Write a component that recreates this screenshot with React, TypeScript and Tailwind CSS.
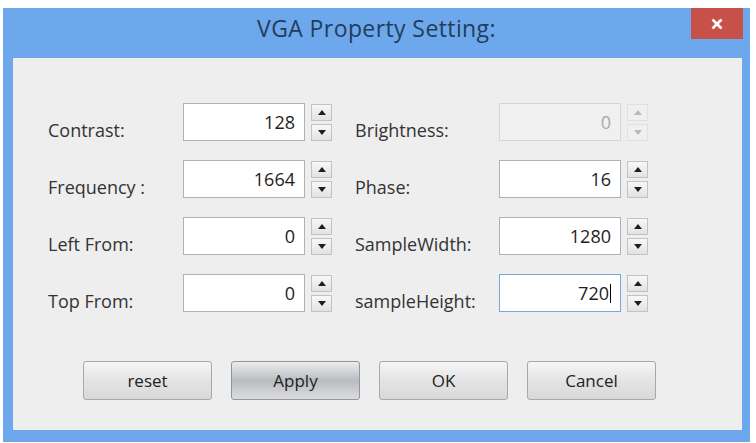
import { ReactNode } from "react";

interface SpinFieldProps {
  label: string;
  value: string;
  labelWidth: string;
  disabled?: boolean;
  focused?: boolean;
  className?: string;
}

function Arrow({ up, disabled }: { up?: boolean; disabled?: boolean }) {
  return (
    <svg width="8" height="5" viewBox="0 0 8 5" aria-hidden="true">
      <polygon
        points={up ? "0,5 8,5 4,0" : "0,0 8,0 4,5"}
        fill={disabled ? "#b9b9b9" : "#1f1f1f"}
      />
    </svg>
  );
}

function SpinBox({ disabled }: { disabled?: boolean }) {
  const box = disabled
    ? "flex h-[17px] w-[21px] items-center justify-center border border-[#e0e0e0] bg-[#f0f0f0]"
    : "flex h-[17px] w-[21px] items-center justify-center border border-[#bfc3c7] bg-gradient-to-b from-[#f8f8f8] to-[#e2e2e2]";
  return (
    <div className="ml-[6px] flex flex-col gap-[3px] pt-[1px]">
      <div className={box}>
        <Arrow up disabled={disabled} />
      </div>
      <div className={box}>
        <Arrow disabled={disabled} />
      </div>
    </div>
  );
}

function SpinField({ label, value, labelWidth, disabled, focused, className }: SpinFieldProps) {
  const inputClass = disabled
    ? "border-[#d6d6d6] bg-[#f0f0f0] text-[#a9a9a9]"
    : focused
      ? "border-[#7ba6d8] bg-white text-[#1e1e1e]"
      : "border-[#adb2b8] bg-white text-[#1e1e1e]";
  return (
    <div className={`flex items-start ${className ?? ""}`}>
      <div className={`${labelWidth} pt-[17px] text-[18px] leading-[20px] text-[#333]`}>{label}</div>
      <div
        className={`flex h-[38px] w-[122px] items-center justify-end border pr-[9px] text-[18px] leading-[20px] ${inputClass}`}
      >
        {value}
        {focused && <span className="ml-[1px] h-[19px] w-[1px] bg-black" />}
      </div>
      <SpinBox disabled={disabled} />
    </div>
  );
}

function DialogButton({ children, active }: { children: ReactNode; active?: boolean }) {
  return (
    <button
      type="button"
      className={`h-[39px] w-[129px] rounded-[3px] border text-[17px] leading-[20px] text-[#222] ${
        active
          ? "border-[#8f969c] bg-gradient-to-b from-[#ececec] via-[#b9bdc1] to-[#dcdcdc]"
          : "border-[#a8a8a8] bg-gradient-to-b from-[#f6f6f6] via-[#e4e4e4] to-[#d9d9d9]"
      }`}
    >
      {children}
    </button>
  );
}

const rows = [
  [
    { label: "Contrast:", value: "128" },
    { label: "Brightness:", value: "0", disabled: true },
  ],
  [
    { label: "Frequency :", value: "1664" },
    { label: "Phase:", value: "16" },
  ],
  [
    { label: "Left From:", value: "0" },
    { label: "SampleWidth:", value: "1280" },
  ],
  [
    { label: "Top From:", value: "0" },
    { label: "sampleHeight:", value: "720", focused: true },
  ],
];

export default function App() {
  return (
    <div className="h-[443px] w-[756px] overflow-hidden bg-white pl-[3px] pt-[8px] font-['Open_Sans','Noto_Sans',sans-serif]">
      <div className="flex h-[434px] w-[747px] flex-col bg-[#6ca8eb]">
        <div className="relative h-[50px] pt-[6px] text-center text-[23px] leading-[28px] tracking-[0.4px] text-[#233d5e]">
          VGA Property Setting:
          <div className="absolute right-[7px] top-0 flex h-[31px] w-[52px] items-center justify-center bg-[#c75049]">
            <svg width="12" height="12" viewBox="0 0 12 12" aria-hidden="true">
              <path d="M1.5 1.5 L10.5 10.5 M10.5 1.5 L1.5 10.5" stroke="white" strokeWidth="2.6" />
            </svg>
          </div>
        </div>
        <div className="ml-[10px] mr-[8px] flex h-[372px] flex-col bg-[#eeeeee] pl-[35px] pt-[45px]">
          <div className="flex flex-col gap-[19px]">
            {rows.map((row, i) => (
              <div key={i} className="flex">
                <SpinField labelWidth="w-[135px]" {...row[0]} />
                <SpinField labelWidth="w-[144px]" className="ml-[23px]" {...row[1]} />
              </div>
            ))}
          </div>
          <div className="mt-[49px] flex gap-[19px] pl-[35px]">
            <DialogButton>reset</DialogButton>
            <DialogButton active>Apply</DialogButton>
            <DialogButton>OK</DialogButton>
            <DialogButton>Cancel</DialogButton>
          </div>
        </div>
      </div>
    </div>
  );
}
